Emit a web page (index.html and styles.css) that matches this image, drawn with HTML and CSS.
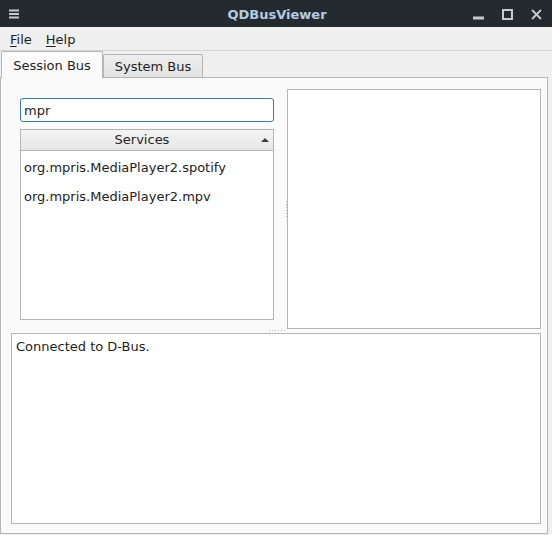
FILE: index.html
```html
<!DOCTYPE html>
<html>
<head>
<meta charset="utf-8">
<title>QDBusViewer</title>
<link rel="stylesheet" href="styles.css">
</head>
<body>
<div class="window">
  <header class="titlebar">
    <div class="tb-left">
      <svg class="icon-menu" width="10" height="10" viewBox="0 0 10 10"><rect x="0" y="0.5" width="10" height="2"/><rect x="0" y="4" width="10" height="2"/><rect x="0" y="7.5" width="10" height="2"/></svg>
    </div>
    <div class="tb-title">QDBusViewer</div>
    <div class="tb-right">
      <svg class="wbtn" width="11" height="11" viewBox="0 0 11 11"><rect x="0" y="8" width="11" height="2"/></svg>
      <svg class="wbtn" width="11" height="11" viewBox="0 0 11 11"><rect x="1" y="1" width="9" height="9" fill="none" stroke-width="2"/></svg>
      <svg class="wbtn" width="11" height="11" viewBox="0 0 11 11"><path d="M1 1 L10 10 M10 1 L1 10" fill="none" stroke-width="1.8"/></svg>
    </div>
  </header>
  <nav class="menubar">
    <span class="menu"><u>F</u>ile</span>
    <span class="menu"><u>H</u>elp</span>
  </nav>
  <div class="tabbar">
    <div class="tab tab-active">Session Bus</div>
    <div class="tab tab-inactive">System Bus</div>
  </div>
  <main class="pane">
    <div class="top-split">
      <div class="left">
        <input class="search" type="text" value="mpr">
        <div class="tree">
          <div class="tree-header"><span class="th-label">Services</span><span class="sort-arrow"></span></div>
          <ul class="tree-list">
            <li>org.mpris.MediaPlayer2.spotify</li>
            <li>org.mpris.MediaPlayer2.mpv</li>
          </ul>
        </div>
      </div>
      <div class="vhandle"><span class="vdots"></span></div>
      <div class="right-panel"></div>
    </div>
    <div class="hhandle"><span class="hdots"></span></div>
    <div class="log">Connected to D-Bus.</div>
  </main>
</div>
</body>
</html>
```
FILE: styles.css
```css
* { box-sizing: border-box; }
html, body {
  margin: 0;
  padding: 0;
}
body {
  width: 552px;
  height: 535px;
  overflow: hidden;
  background: #efefef;
  font-family: "DejaVu Sans", "Noto Sans", sans-serif;
  font-size: 13px;
  color: #232323;
}
.window {
  display: flex;
  flex-direction: column;
  width: 552px;
  height: 535px;
}
.titlebar {
  height: 27px;
  background: #232b30;
  display: grid;
  grid-template-columns: 1fr auto 1fr;
  align-items: center;
}
.tb-left {
  padding-left: 9px;
  display: flex;
  align-items: center;
  padding-top: 1px;
}
.icon-menu { fill: #c3cad0; }
.tb-title {
  font-weight: bold;
  color: #b3cbe0;
  font-size: 13px;
  padding-top: 1px;
  padding-left: 2px;
}
.tb-right {
  display: flex;
  justify-content: flex-end;
  align-items: center;
  gap: 18px;
  padding-right: 10px;
  padding-top: 1px;
}
.wbtn { fill: #c3cad0; stroke: #c3cad0; }
.menubar {
  height: 24px;
  border-bottom: 1px solid #d4d4d4;
  display: flex;
  padding-left: 3px;
  line-height: 23px;
  padding-top: 1px;
}
.menu {
  padding: 0 7px;
  color: #1e1e1e;
}
.menu u {
  text-decoration: underline;
  text-underline-offset: 2px;
}
.tabbar {
  display: flex;
  align-items: flex-end;
  height: 27px;
  padding-left: 1px;
  margin-bottom: -1px;
  position: relative;
  z-index: 2;
}
.tab {
  border: 1px solid #b5b5b5;
  border-bottom: none;
  border-radius: 2px 2px 0 0;
  text-align: center;
  line-height: 15px;
  color: #1e1e1e;
}
.tab-active {
  width: 102px;
  height: 27px;
  background: #fafafa;
  padding-top: 6px;
}
.tab-inactive {
  width: 100px;
  height: 23px;
  margin-bottom: 1px;
  background: linear-gradient(#ededed, #e3e3e3);
  padding-top: 4px;
}
.pane {
  position: relative;
  z-index: 1;
  width: 548px;
  height: 457px;
  background: #fafafa;
  border: 1px solid #b6b6b6;
  padding: 11px 6px 9px 10px;
  display: flex;
  flex-direction: column;
}
.top-split {
  height: 240px;
  display: flex;
}
.left {
  width: 272px;
  padding: 9px;
  display: flex;
  flex-direction: column;
  gap: 7px;
}
.search {
  height: 24px;
  width: 100%;
  border: 1px solid #3b7cae;
  border-radius: 3px;
  background: #ffffff;
  font-family: "DejaVu Sans", "Noto Sans", sans-serif;
  font-size: 13px;
  color: #1e1e1e;
  padding: 0 3px;
  margin: 0;
  outline: none;
}
.tree {
  flex: 1;
  border: 1px solid #b5b5b5;
  background: #ffffff;
  display: flex;
  flex-direction: column;
}
.tree-header {
  height: 21px;
  border-bottom: 1px solid #b5b5b5;
  background: linear-gradient(#f4f4f4, #e6e6e6);
  display: flex;
  align-items: center;
  padding-right: 4px;
  line-height: 20px;
}
.th-label {
  flex: 1;
  text-align: center;
  padding-left: 2px;
}
.sort-arrow {
  width: 0;
  height: 0;
  border-left: 4px solid transparent;
  border-right: 4px solid transparent;
  border-bottom: 4px solid #3c3c3c;
  margin-right: 0;
  margin-top: -1px;
}
.tree-list {
  list-style: none;
  margin: 0;
  padding: 2px 0 0 3px;
}
.tree-list li {
  line-height: 29px;
  height: 29px;
  white-space: nowrap;
}
.vhandle {
  width: 4px;
  display: flex;
  align-items: center;
  padding-left: 3px;
}
.vdots {
  width: 1px;
  height: 16px;
  background: repeating-linear-gradient(to bottom, #b8b8b8 0 1px, transparent 1px 3px);
}
.right-panel {
  flex: 1;
  border: 1px solid #b5b5b5;
  background: #ffffff;
}
.hhandle {
  height: 4px;
  display: flex;
  justify-content: center;
  padding-top: 1px;
  padding-left: 2px;
}
.hdots {
  width: 16px;
  height: 1px;
  background: repeating-linear-gradient(to right, #b8b8b8 0 1px, transparent 1px 3px);
}
.log {
  flex: 1;
  border: 1px solid #b5b5b5;
  background: #ffffff;
  padding: 5px 4px;
  line-height: 15px;
  color: #1e1e1e;
}
```
